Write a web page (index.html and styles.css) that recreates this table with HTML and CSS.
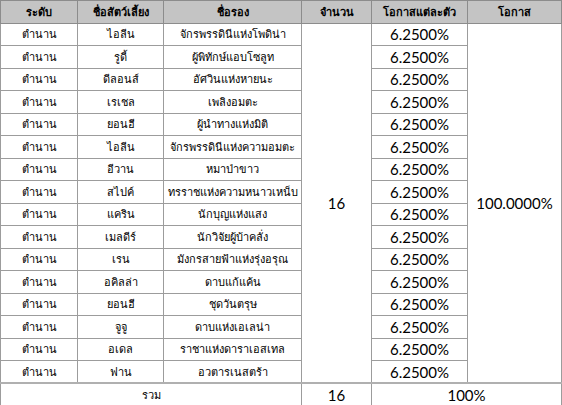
FILE: index.html
```html
<!DOCTYPE html>
<html lang="th">
<head>
<meta charset="utf-8">
<link rel="stylesheet" href="styles.css">
</head>
<body>
<table class="grid">
  <colgroup>
    <col class="c1"><col class="c2"><col class="c3"><col class="c4"><col class="c5"><col class="c6">
  </colgroup>
  <thead>
    <tr class="head">
      <th>ระดับ</th><th>ชื่อสัตว์เลี้ยง</th><th>ชื่อรอง</th><th>จำนวน</th><th>โอกาสแต่ละตัว</th><th>โอกาส</th>
    </tr>
  </thead>
  <tbody>
    <tr><td class="th">ตำนาน</td><td class="th">ไอลีน</td><td class="th">จักรพรรดินีแห่งโพดิน่า</td><td class="num big" rowspan="16">16</td><td class="num">6.2500%</td><td class="num" rowspan="16">100.0000%</td></tr>
    <tr><td class="th">ตำนาน</td><td class="th">รูดี้</td><td class="th">ผู้พิทักษ์แอบโซลูท</td><td class="num">6.2500%</td></tr>
    <tr><td class="th">ตำนาน</td><td class="th">ดีลอนส์</td><td class="th">อัศวินแห่งหายนะ</td><td class="num">6.2500%</td></tr>
    <tr><td class="th">ตำนาน</td><td class="th">เรเชล</td><td class="th">เพลิงอมตะ</td><td class="num">6.2500%</td></tr>
    <tr><td class="th">ตำนาน</td><td class="th">ยอนฮี</td><td class="th">ผู้นำทางแห่งมิติ</td><td class="num">6.2500%</td></tr>
    <tr><td class="th">ตำนาน</td><td class="th">ไอลีน</td><td class="th">จักรพรรดินีแห่งความอมตะ</td><td class="num">6.2500%</td></tr>
    <tr><td class="th">ตำนาน</td><td class="th">อีวาน</td><td class="th">หมาป่าขาว</td><td class="num">6.2500%</td></tr>
    <tr><td class="th">ตำนาน</td><td class="th">สไปค์</td><td class="th">ทรราชแห่งความหนาวเหน็บ</td><td class="num">6.2500%</td></tr>
    <tr><td class="th">ตำนาน</td><td class="th">แคริน</td><td class="th">นักบุญแห่งแสง</td><td class="num">6.2500%</td></tr>
    <tr><td class="th">ตำนาน</td><td class="th">เมลดีร์</td><td class="th">นักวิจัยผู้บ้าคลั่ง</td><td class="num">6.2500%</td></tr>
    <tr><td class="th">ตำนาน</td><td class="th">เรน</td><td class="th">มังกรสายฟ้าแห่งรุ่งอรุณ</td><td class="num">6.2500%</td></tr>
    <tr><td class="th">ตำนาน</td><td class="th">อคิลล่า</td><td class="th">ดาบแก้แค้น</td><td class="num">6.2500%</td></tr>
    <tr><td class="th">ตำนาน</td><td class="th">ยอนฮี</td><td class="th">ชุดวันตรุษ</td><td class="num">6.2500%</td></tr>
    <tr><td class="th">ตำนาน</td><td class="th">จูจู</td><td class="th">ดาบแห่งเอเลน่า</td><td class="num">6.2500%</td></tr>
    <tr><td class="th">ตำนาน</td><td class="th">อเดล</td><td class="th">ราชาแห่งดาราเอสเทล</td><td class="num">6.2500%</td></tr>
    <tr><td class="th">ตำนาน</td><td class="th">ฟาน</td><td class="th">อวตารเนสตร้า</td><td class="num">6.2500%</td></tr>
    <tr class="total"><td class="th" colspan="3">รวม</td><td class="num">16</td><td class="num" colspan="2">100%</td></tr>
  </tbody>
</table>
</body>
</html>
```

FILE: styles.css
```css
html, body {
  margin: 0;
  padding: 0;
  background: #ffffff;
}

.grid {
  border-collapse: collapse;
  table-layout: fixed;
  width: 561px;
  height: 405px;
  color: #000000;
}

.c1 { width: 77px; }
.c2 { width: 86px; }
.c3 { width: 138px; }
.c4 { width: 70px; }
.c5 { width: 96px; }
.c6 { width: 94px; }

.grid th,
.grid td {
  border: 1px solid #9c9c9c;
  padding: 0;
  text-align: center;
  vertical-align: middle;
  white-space: nowrap;
  overflow: hidden;
}

.grid tr {
  height: 22.5px;
}

.head th {
  background: #c4c4c4;
  font-family: "DejaVu Sans", "Noto Sans", sans-serif;
  font-size: 11px;
  font-weight: bold;
  border-color: #8c8c8c;
}

.th {
  font-family: "DejaVu Sans", "Noto Sans", sans-serif;
  font-size: 11px;
}

.num {
  font-family: "Lato", "Liberation Sans", sans-serif;
  font-size: 15px;
}

.total td {
  border-top: 2px solid #b0b0b0;
}
```
